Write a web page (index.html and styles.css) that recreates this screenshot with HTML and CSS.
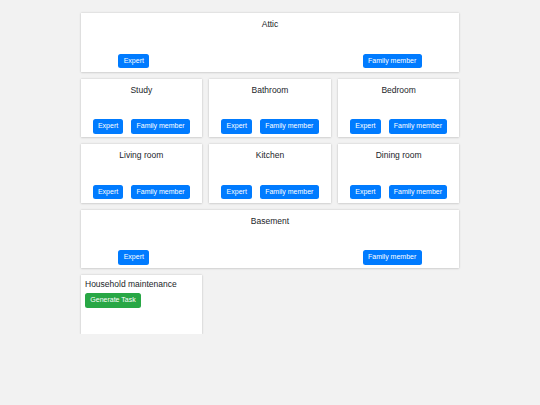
FILE: index.html
```html
<!DOCTYPE html>
<html>
<head>
<meta charset="utf-8">
<link rel="stylesheet" href="styles.css">
</head>
<body>
<div class="board">
  <div class="card room wide">
    <div class="title">Attic</div>
    <div class="actions"><button class="btn blue">Expert</button><button class="btn blue">Family member</button></div>
  </div>
  <div class="card room">
    <div class="title">Study</div>
    <div class="actions"><button class="btn blue">Expert</button><button class="btn blue">Family member</button></div>
  </div>
  <div class="card room">
    <div class="title">Bathroom</div>
    <div class="actions"><button class="btn blue">Expert</button><button class="btn blue">Family member</button></div>
  </div>
  <div class="card room">
    <div class="title">Bedroom</div>
    <div class="actions"><button class="btn blue">Expert</button><button class="btn blue">Family member</button></div>
  </div>
  <div class="card room">
    <div class="title">Living room</div>
    <div class="actions"><button class="btn blue">Expert</button><button class="btn blue">Family member</button></div>
  </div>
  <div class="card room">
    <div class="title">Kitchen</div>
    <div class="actions"><button class="btn blue">Expert</button><button class="btn blue">Family member</button></div>
  </div>
  <div class="card room">
    <div class="title">Dining room</div>
    <div class="actions"><button class="btn blue">Expert</button><button class="btn blue">Family member</button></div>
  </div>
  <div class="card room wide">
    <div class="title">Basement</div>
    <div class="actions"><button class="btn blue">Expert</button><button class="btn blue">Family member</button></div>
  </div>
  <div class="card maint">
    <div class="mtitle">Household maintenance</div>
    <button class="btn green">Generate Task</button>
  </div>
</div>
</body>
</html>
```
FILE: styles.css
```css
html, body {
  margin: 0;
  padding: 0;
  background: #f2f2f2;
  font-family: "Liberation Sans", Arial, sans-serif;
  color: #212529;
}
body {
  padding-top: 13px;
}
.board {
  width: 379px;
  margin: 0 auto;
  display: grid;
  grid-template-columns: repeat(3, 1fr);
  grid-auto-rows: 58.5px;
  gap: 7px;
}
.card {
  background: #ffffff;
  box-shadow: 0 0 2px rgba(0, 0, 0, 0.18), 0 1px 2px rgba(0, 0, 0, 0.08);
  box-sizing: border-box;
}
.wide {
  grid-column: 1 / -1;
}
.room {
  display: flex;
  flex-direction: column;
  padding: 5px 0 3.5px;
}
.title {
  font-size: 8.5px;
  line-height: 12px;
  text-align: center;
}
.actions {
  margin-top: auto;
  display: flex;
  justify-content: space-between;
  padding: 0 10%;
}
.btn {
  font-family: "Liberation Sans", Arial, sans-serif;
  font-size: 7px;
  line-height: 10.5px;
  padding: 2px 5.3px;
  border: none;
  border-radius: 2.5px;
  color: #ffffff;
  margin: 0;
}
.blue {
  background: #007bff;
}
.green {
  background: #28a745;
}
.maint {
  padding: 3px 4.5px;
  display: flex;
  flex-direction: column;
  align-items: flex-start;
}
.mtitle {
  font-size: 8.5px;
  line-height: 12px;
  margin-bottom: 3px;
}
```
